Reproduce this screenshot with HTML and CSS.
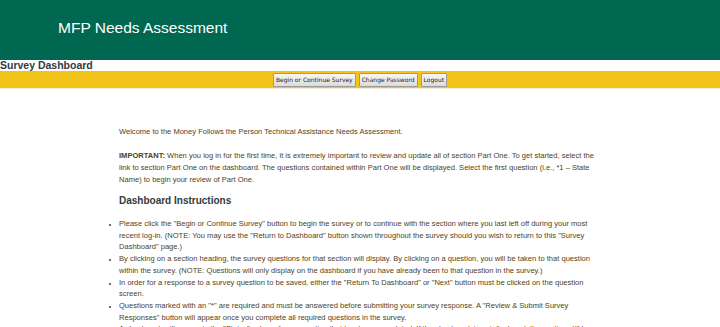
FILE: index.html
```html
<!DOCTYPE html>
<html>
<head>
<meta charset="utf-8">
<link rel="stylesheet" href="styles.css">
</head>
<body>
<header class="top">
  <h1 class="site-title">MFP Needs Assessment</h1>
</header>
<div class="page-title">Survey Dashboard</div>
<nav class="toolbar">
  <button class="btn">Begin or Continue Survey</button>
  <button class="btn">Change Password</button>
  <button class="btn">Logout</button>
</nav>
<main class="content">
  <p class="intro">Welcome to the Money Follows the Person Technical Assistance Needs Assessment.</p>
  <p class="important"><b>IMPORTANT:</b> When you log in for the first time, it is extremely important to review and update all of section Part One. To get started, select the link to section Part One on the dashboard. The questions contained within Part One will be displayed. Select the first question (i.e., *1 – State Name) to begin your review of Part One.</p>
  <h2 class="section-title">Dashboard Instructions</h2>
  <ul class="instructions">
    <li>Please click the "Begin or Continue Survey" button to begin the survey or to continue with the section where you last left off during your most recent log-in. (NOTE: You may use the "Return to Dashboard" button shown throughout the survey should you wish to return to this "Survey Dashboard" page.)</li>
    <li>By clicking on a section heading, the survey questions for that section will display. By clicking on a question, you will be taken to that question within the survey. (NOTE: Questions will only display on the dashboard if you have already been to that question in the survey.)</li>
    <li>In order for a response to a survey question to be saved, either the "Return To Dashboard" or "Next" button must be clicked on the question screen.</li>
    <li>Questions marked with an "*" are required and must be answered before submitting your survey response. A "Review &amp; Submit Survey Responses" button will appear once you complete all required questions in the survey.</li>
    <li>A checkmark will appear in the "Status" column for any section that has been completed. If the checkmark is not displayed, the section still has required questions to answer.</li>
  </ul>
</main>
</body>
</html>
```
FILE: styles.css
```css
html, body {
  margin: 0;
  padding: 0;
  background: #ffffff;
  font-family: "Liberation Sans", Arial, sans-serif;
}
.top {
  background: #006851;
  height: 60px;
  display: flex;
  align-items: center;
  padding-left: 58px;
}
.site-title {
  margin: 0 0 5px 0;
  color: #ffffff;
  font-weight: normal;
  font-size: 15.5px;
}
.page-title {
  font-weight: bold;
  font-size: 10.5px;
  line-height: 11px;
  color: #333a40;
  height: 11px;
}
.toolbar {
  background: #f2c419;
  height: 17px;
  display: flex;
  justify-content: center;
  align-items: center;
  gap: 3px;
  border-bottom: 1px solid #f4ecd0;
}
.btn {
  font-family: "DejaVu Sans", Tahoma, sans-serif;
  font-size: 6px;
  color: #222;
  background: linear-gradient(#f6f6f6, #dcdcdc);
  border: 1px solid #9a9a9a;
  border-radius: 1px;
  height: 14px;
  padding: 0 2px;
  margin: 0;
}
.content {
  width: 482px;
  margin: 0 auto;
  padding-top: 37px;
  font-size: 7.55px;
  line-height: 12px;
  color: #4f3f22;
}
.content p {
  margin: 0 0 12px 0;
}
.content p.important {
  margin-bottom: 0;
}
.section-title {
  font-size: 10px;
  font-weight: bold;
  color: #333a40;
  margin: 8px 0 10px 0;
  line-height: 14px;
}
.instructions {
  margin: 0;
  padding-left: 0;
  list-style-position: outside;
  list-style-type: disc;
  line-height: 11.7px;
}
.instructions li::marker {
  font-size: 6px;
}
```
